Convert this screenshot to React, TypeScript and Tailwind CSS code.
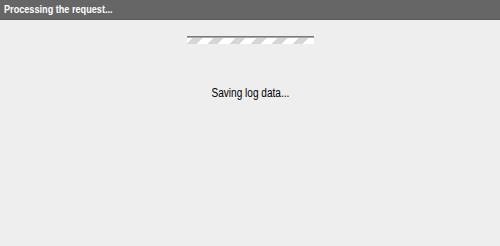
export default function App() {
  return (
    <div className="w-[500px] h-[246px] bg-[#eeeeee] flex flex-col" style={{ fontFamily: '"Liberation Sans", Arial, sans-serif' }}>
      <div className="h-[20px] bg-[#666666] border-b border-[#5a5a5a] flex items-center px-[4px] shrink-0">
        <span className="inline-block origin-left scale-x-[0.83] whitespace-nowrap text-white font-bold text-[11px] leading-none">Processing the request...</span>
      </div>
      <div className="flex flex-col items-center pt-[16px]">
        <div className="w-[127px] flex flex-col">
          <div className="h-[1px] bg-[#7a7a7a]" />
          <div className="h-[1px] bg-[#a8a8a8]" />
          <div className="h-[6px] bg-[repeating-linear-gradient(-45deg,#ffffff_0px,#ffffff_8px,#d6d6d6_8px,#d6d6d6_15px)]" />
        </div>
        <div className="mt-[43px] inline-block origin-center scale-x-[0.84] whitespace-nowrap text-[12px] text-black leading-none">Saving log data...</div>
      </div>
    </div>
  );
}
